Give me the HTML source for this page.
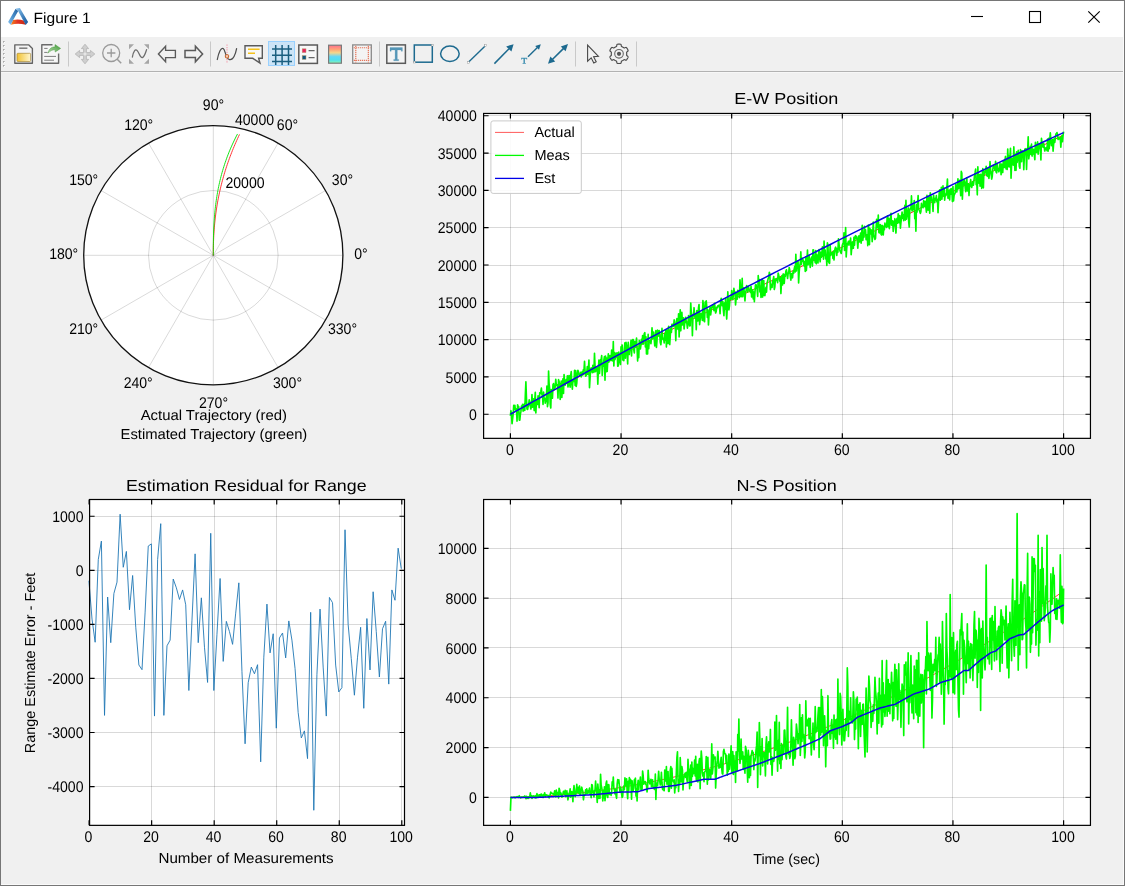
<!DOCTYPE html>
<html><head><meta charset="utf-8"><title>Figure 1</title>
<style>html,body{margin:0;padding:0;background:#f0f0f0;overflow:hidden}body{width:1125px;height:886px;position:relative;font-family:"Liberation Sans", sans-serif}svg{position:absolute;left:0;top:0;will-change:transform;font-family:"Liberation Sans", sans-serif}text{white-space:pre;text-rendering:geometricPrecision}</style></head><body>
<svg width="1125" height="886" viewBox="0 0 1125 886">
<rect x="0" y="0" width="1125" height="886" fill="#f0f0f0"/>
<rect x="0" y="0" width="1125" height="37" fill="#fff"/>
<rect x="0" y="71" width="1125" height="1" fill="#b2b2b2"/>
<rect x="0" y="72" width="1125" height="1" fill="#f7f7f7"/>
<defs><linearGradient id="lgL" x1="0" y1="1" x2="1" y2="0"><stop offset="0" stop-color="#82bfee"/><stop offset="0.5" stop-color="#4a8fcb"/><stop offset="1" stop-color="#2562a2"/></linearGradient><linearGradient id="lgR" x1="0" y1="0" x2="1" y2="1"><stop offset="0" stop-color="#93c8ef"/><stop offset="0.35" stop-color="#5d9bd0"/><stop offset="0.7" stop-color="#2f6fae"/><stop offset="1" stop-color="#17549a"/></linearGradient><linearGradient id="lgB" x1="0" y1="0" x2="1" y2="0"><stop offset="0" stop-color="#f58a1c"/><stop offset="0.45" stop-color="#e23424"/><stop offset="1" stop-color="#c42a14"/></linearGradient><linearGradient id="gSave" x1="0" y1="0" x2="1" y2="0"><stop offset="0" stop-color="#f2c230"/><stop offset="1" stop-color="#fff6cf"/></linearGradient><linearGradient id="gCb" x1="0" y1="0" x2="0" y2="1"><stop offset="0" stop-color="#ff6f8e"/><stop offset="0.25" stop-color="#ffa878"/><stop offset="0.42" stop-color="#f6d78c"/><stop offset="0.53" stop-color="#aed6c2"/><stop offset="0.64" stop-color="#62d8f8"/><stop offset="0.82" stop-color="#52e0ee"/><stop offset="1" stop-color="#8af8b0"/></linearGradient><linearGradient id="gArr" x1="0" y1="1" x2="1" y2="0"><stop offset="0" stop-color="#b9dcae"/><stop offset="1" stop-color="#3f9a35"/></linearGradient></defs>
<path d="M13 20.1Q18.1 18.9 23.6 20.5L25.8 24.8Q18.1 22.8 10.8 24.7Z" fill="url(#lgB)"/>
<path d="M15.6 8.8L18.2 10.9L12.9 20.4L10.7 24.7L8.1 21.9Z" fill="url(#lgL)"/>
<path d="M15.9 8.5L19.9 8L28.1 21.9L25.7 24.9L18.1 11.1Z" fill="url(#lgR)"/>
<text x="33.6" y="22.9" font-size="14.8" fill="#000" textLength="57" lengthAdjust="spacingAndGlyphs">Figure 1</text>
<path d="M971 16.5H983" stroke="#000" stroke-width="1.1"/>
<rect x="1029.5" y="11.5" width="11" height="11" fill="none" stroke="#000" stroke-width="1.1"/>
<path d="M1088.3 11.3L1099.7 22.7M1099.7 11.3L1088.3 22.7" stroke="#000" stroke-width="1.15"/>
<rect x="3" y="41" width="1.6" height="1.6" fill="#a8a8a8"/><rect x="4" y="42" width="1" height="1" fill="#fff"/><rect x="3" y="45" width="1.6" height="1.6" fill="#a8a8a8"/><rect x="4" y="46" width="1" height="1" fill="#fff"/><rect x="3" y="49" width="1.6" height="1.6" fill="#a8a8a8"/><rect x="4" y="50" width="1" height="1" fill="#fff"/><rect x="3" y="53" width="1.6" height="1.6" fill="#a8a8a8"/><rect x="4" y="54" width="1" height="1" fill="#fff"/><rect x="3" y="57" width="1.6" height="1.6" fill="#a8a8a8"/><rect x="4" y="58" width="1" height="1" fill="#fff"/><rect x="3" y="61" width="1.6" height="1.6" fill="#a8a8a8"/><rect x="4" y="62" width="1" height="1" fill="#fff"/><rect x="3" y="65" width="1.6" height="1.6" fill="#a8a8a8"/><rect x="4" y="66" width="1" height="1" fill="#fff"/>
<path d="M68.5 41.5V66.5" stroke="#c9c9c9" stroke-width="1"/>
<path d="M210.5 41.5V66.5" stroke="#c9c9c9" stroke-width="1"/>
<path d="M379.5 41.5V66.5" stroke="#c9c9c9" stroke-width="1"/>
<path d="M575.5 41.5V66.5" stroke="#c9c9c9" stroke-width="1"/>
<path d="M636.5 41.5V66.5" stroke="#c9c9c9" stroke-width="1"/>
<circle cx="213.3" cy="255.3" r="129.6" fill="#fff"/>
<path d="M213.3 255.3L342.9 255.3M213.3 255.3L325.54 190.5M213.3 255.3L278.1 143.06M213.3 255.3L213.3 125.7M213.3 255.3L148.5 143.06M213.3 255.3L101.06 190.5M213.3 255.3L83.7 255.3M213.3 255.3L101.06 320.1M213.3 255.3L148.5 367.54M213.3 255.3L213.3 384.9M213.3 255.3L278.1 367.54M213.3 255.3L325.54 320.1" stroke="#000" stroke-opacity="0.15" stroke-width="1" fill="none"/>
<circle cx="213.3" cy="255.3" r="64.8" fill="none" stroke="#000" stroke-opacity="0.15" stroke-width="1"/>
<path d="M213.3 255.3L213.3 253.29L213.31 251.27L213.34 249.26L213.37 247.24L213.41 245.23L213.47 243.21L213.53 241.2L213.61 239.19L213.7 237.17L213.81 235.16L213.93 233.14L214.06 231.13L214.21 229.12L214.37 227.1L214.54 225.09L214.73 223.07L214.94 221.06L215.15 219.04L215.39 217.03L215.64 215.02L215.9 213L216.18 210.99L216.48 208.97L216.79 206.96L217.12 204.95L217.46 202.93L217.82 200.92L218.2 198.9L218.59 196.89L219 194.87L219.43 192.86L219.87 190.85L220.34 188.83L220.81 186.82L221.31 184.8L221.82 182.79L222.35 180.77L222.9 178.76L223.46 176.75L224.04 174.73L224.64 172.72L225.26 170.7L225.89 168.69L226.55 166.68L227.22 164.66L227.91 162.65L228.62 160.63L229.34 158.62L230.09 156.6L230.85 154.59L231.63 152.58L232.43 150.56L233.25 148.55L234.09 146.53L234.95 144.52L235.82 142.5L236.71 140.49L237.63 138.48L238.56 136.46L239.51 134.45" stroke="#ff2020" stroke-width="0.9" fill="none"/>
<path d="M213.3 255.3L213.3 253.28L213.3 251.26L213.31 249.23L213.32 247.21L213.33 245.19L213.35 243.17L213.38 241.14L213.42 239.12L213.46 237.1L213.51 235.08L213.57 233.05L213.64 231.03L213.72 229.01L213.81 226.99L213.91 224.97L214.03 222.94L214.16 220.92L214.3 218.9L214.45 216.88L214.62 214.85L214.8 212.83L215 210.81L215.21 208.79L215.43 206.76L215.68 204.74L215.94 202.72L216.22 200.7L216.51 198.68L216.82 196.65L217.16 194.63L217.51 192.61L217.88 190.59L218.26 188.56L218.67 186.54L219.1 184.52L219.55 182.5L220.02 180.47L220.51 178.45L221.03 176.43L221.56 174.41L222.12 172.39L222.71 170.36L223.31 168.34L223.94 166.32L224.59 164.3L225.27 162.27L225.97 160.25L226.7 158.23L227.45 156.21L228.23 154.19L229.03 152.16L229.86 150.14L230.72 148.12L231.61 146.1L232.52 144.07L233.46 142.05L234.43 140.03L235.42 138.01L236.45 135.98L237.5 133.96" stroke="#00e000" stroke-width="0.9" fill="none"/>
<circle cx="213.3" cy="255.3" r="129.6" fill="none" stroke="#111" stroke-width="1.3"/>
<text x="361" y="258.8" font-size="15.4" text-anchor="middle" fill="#000" textLength="13.47" lengthAdjust="spacingAndGlyphs">0°</text>
<text x="342.5" y="184.8" font-size="15.4" text-anchor="middle" fill="#000" textLength="21.31" lengthAdjust="spacingAndGlyphs">30°</text>
<text x="287.5" y="129.8" font-size="15.4" text-anchor="middle" fill="#000" textLength="21.31" lengthAdjust="spacingAndGlyphs">60°</text>
<text x="213.5" y="109.8" font-size="15.4" text-anchor="middle" fill="#000" textLength="21.31" lengthAdjust="spacingAndGlyphs">90°</text>
<text x="138.7" y="129.8" font-size="15.4" text-anchor="middle" fill="#000" textLength="29.14" lengthAdjust="spacingAndGlyphs">120°</text>
<text x="83.7" y="184.8" font-size="15.4" text-anchor="middle" fill="#000" textLength="29.14" lengthAdjust="spacingAndGlyphs">150°</text>
<text x="63.7" y="258.8" font-size="15.4" text-anchor="middle" fill="#000" textLength="29.14" lengthAdjust="spacingAndGlyphs">180°</text>
<text x="83.7" y="333.8" font-size="15.4" text-anchor="middle" fill="#000" textLength="29.14" lengthAdjust="spacingAndGlyphs">210°</text>
<text x="138.2" y="387.8" font-size="15.4" text-anchor="middle" fill="#000" textLength="29.14" lengthAdjust="spacingAndGlyphs">240°</text>
<text x="213.5" y="407.8" font-size="15.4" text-anchor="middle" fill="#000" textLength="29.14" lengthAdjust="spacingAndGlyphs">270°</text>
<text x="287.5" y="387.8" font-size="15.4" text-anchor="middle" fill="#000" textLength="29.14" lengthAdjust="spacingAndGlyphs">300°</text>
<text x="342.5" y="333.8" font-size="15.4" text-anchor="middle" fill="#000" textLength="29.14" lengthAdjust="spacingAndGlyphs">330°</text>
<text x="245" y="187.8" font-size="15.4" text-anchor="middle" fill="#000" textLength="39.17" lengthAdjust="spacingAndGlyphs">20000</text>
<text x="254.5" y="124.8" font-size="15.4" text-anchor="middle" fill="#000" textLength="39.17" lengthAdjust="spacingAndGlyphs">40000</text>
<text x="213.85" y="419.6" font-size="14.5" text-anchor="middle" fill="#000" textLength="146.4" lengthAdjust="spacingAndGlyphs">Actual Trajectory (red)</text>
<text x="213.9" y="438.7" font-size="14.5" text-anchor="middle" fill="#000" textLength="186.8" lengthAdjust="spacingAndGlyphs">Estimated Trajectory (green)</text>
<rect x="483.6" y="113.45" width="606.85" height="324.9" fill="#fff"/>
<path d="M510.5 113.45V438.35M621.5 113.45V438.35M731.5 113.45V438.35M842.5 113.45V438.35M952.5 113.45V438.35M1063.5 113.45V438.35" stroke="#000" stroke-opacity="0.15" stroke-width="1" fill="none"/>
<path d="M483.6 414.5H1090.45M483.6 376.5H1090.45M483.6 339.5H1090.45M483.6 302.5H1090.45M483.6 265.5H1090.45M483.6 227.5H1090.45M483.6 190.5H1090.45M483.6 153.5H1090.45M483.6 115.5H1090.45" stroke="#000" stroke-opacity="0.15" stroke-width="1" fill="none"/>
<path d="M510.4 414.25L515.93 411.19L521.46 408.13L527 405.08L532.53 402.04L538.06 399L543.59 395.97L549.12 392.94L554.66 389.92L560.19 386.91L565.72 383.9L571.25 380.97L576.78 378.04L582.32 375.12L587.85 372.21L593.38 369.31L598.91 366.4L604.44 363.51L609.98 360.62L615.51 357.74L621.04 354.86L626.57 352.06L632.1 349.27L637.64 346.48L643.17 343.7L648.7 340.93L654.23 338.16L659.76 335.39L665.3 332.63L670.83 329.88L676.36 327.14L681.89 324.39L687.42 321.66L692.96 318.93L698.49 316.21L704.02 313.49L709.55 310.78L715.08 308.07L720.62 305.37L726.15 302.67L731.68 299.98L737.21 297.3L742.74 294.62L748.28 291.95L753.81 289.28L759.34 286.62L764.87 283.96L770.4 281.31L775.94 278.67L781.47 276.03L787 273.4L792.53 270.73L798.06 268.08L803.6 265.42L809.13 262.78L814.66 260.13L820.19 257.5L825.72 254.87L831.26 252.24L836.79 249.63L842.32 247.01L847.85 244.26L853.38 241.51L858.92 238.76L864.45 236.02L869.98 233.29L875.51 230.56L881.04 227.84L886.58 225.12L892.11 222.41L897.64 219.7L903.17 216.85L908.7 214.01L914.24 211.17L919.77 208.34L925.3 205.52L930.83 202.7L936.36 199.88L941.9 197.07L947.43 194.27L952.96 191.47L958.49 188.64L964.02 185.82L969.56 183L975.09 180.19L980.62 177.38L986.15 174.58L991.68 171.79L997.22 169L1002.75 166.21L1008.28 163.44L1013.81 160.55L1019.34 157.67L1024.88 154.8L1030.41 151.93L1035.94 149.07L1041.47 146.22L1047 143.37L1052.54 140.52L1058.07 137.68L1063.6 134.85" stroke="#ff2020" stroke-width="1" fill="none"/>
<path d="M510.4 415.87L510.95 410.7L511.51 415.07L512.06 423.7L512.61 418.92L513.17 414.07L513.72 405.36L514.27 409.42L514.83 405.22L515.38 409.92L515.93 408.69L516.49 409.71L517.04 421.14L517.59 404.85L518.14 406.75L518.7 406.5L519.25 420.08L519.8 420.11L520.36 414.39L520.91 411.41L521.46 406.2L522.02 408.12L522.57 404.22L523.12 411.29L523.68 404.96L524.23 404.11L524.78 410.5L525.34 395.1L525.89 381.72L526.44 397.8L527 409.02L527.55 409.47L528.1 406.66L528.66 404.85L529.21 399.86L529.76 401.99L530.32 406.09L530.87 409.02L531.42 405.95L531.97 394.6L532.53 407.16L533.08 400.18L533.63 398.73L534.19 410.58L534.74 400.52L535.29 392.24L535.85 412.99L536.4 401.95L536.95 400.28L537.51 404.49L538.06 395.85L538.61 399.09L539.17 407.68L539.72 392.84L540.27 393.54L540.83 391.49L541.38 388.04L541.93 394.58L542.49 395.82L543.04 404.51L543.59 392.07L544.15 399.55L544.7 398.23L545.25 403.08L545.8 400.9L546.36 397.82L546.91 385.98L547.46 406.74L548.02 402.79L548.57 371.05L549.12 383.79L549.68 388.97L550.23 404.39L550.78 408.01L551.34 389.47L551.89 396.1L552.44 398.23L553 384.63L553.55 383.54L554.1 389.23L554.66 388.36L555.21 386.86L555.76 379.21L556.32 385.09L556.87 385.42L557.42 384.94L557.98 398.06L558.53 379.68L559.08 381.45L559.63 383.85L560.19 399.43L560.74 390.62L561.29 380.96L561.85 397.49L562.4 386.87L562.95 378.93L563.51 393.42L564.06 374.59L564.61 381L565.17 385.15L565.72 381.84L566.27 379.48L566.83 382.55L567.38 375.75L567.93 386.92L568.49 385.06L569.04 375.53L569.59 381.67L570.15 387.14L570.7 375.26L571.25 371.67L571.81 383.5L572.36 389.13L572.91 380.94L573.46 380.74L574.02 381.39L574.57 370.3L575.12 385.43L575.68 370.63L576.23 386.38L576.78 383.03L577.34 373.75L577.89 370.3L578.44 371.72L579 374.69L579.55 375.68L580.1 375.32L580.66 372.35L581.21 376.83L581.76 373.66L582.32 371.49L582.87 374.83L583.42 369.7L583.98 370.66L584.53 361.21L585.08 371.61L585.64 376.09L586.19 375.45L586.74 372.88L587.29 366.64L587.85 374.35L588.4 369.47L588.95 359.98L589.51 387.61L590.06 378.18L590.61 369.21L591.17 367.94L591.72 368.66L592.27 372.62L592.83 365.44L593.38 367.52L593.93 372.33L594.49 353.31L595.04 366.18L595.59 371.66L596.15 368.49L596.7 369L597.25 367.67L597.81 384.29L598.36 369.78L598.91 360.01L599.47 373.53L600.02 366.25L600.57 359.49L601.12 359.82L601.68 355.5L602.23 375.46L602.78 366.62L603.34 366.25L603.89 359.85L604.44 356.58L605 380.24L605.55 356.03L606.1 371.82L606.66 358.02L607.21 371.53L607.76 360.66L608.32 353.91L608.87 362.14L609.42 359.7L609.98 355.56L610.53 359.43L611.08 360.6L611.64 350.03L612.19 352.82L612.74 361.04L613.3 341.48L613.85 365.87L614.4 352.51L614.95 359.71L615.51 356.9L616.06 352.98L616.61 355.75L617.17 352.82L617.72 366.27L618.27 365.87L618.83 352.11L619.38 361.83L619.93 361.94L620.49 364.47L621.04 346.83L621.59 349.84L622.15 344.95L622.7 359.97L623.25 353.73L623.81 360.69L624.36 348.32L624.91 342.82L625.47 358.27L626.02 342.44L626.57 345.79L627.13 352.91L627.68 364.01L628.23 342.3L628.78 351.55L629.34 354.49L629.89 347.85L630.44 347.5L631 340.32L631.55 356.02L632.1 342.06L632.66 339.55L633.21 339.5L633.76 349.58L634.32 352.87L634.87 341.41L635.42 346.86L635.98 346.53L636.53 338L637.08 348.43L637.64 361.05L638.19 348.66L638.74 357.68L639.3 340.45L639.85 343.36L640.4 348.97L640.96 344.87L641.51 339.25L642.06 343.76L642.61 335.56L643.17 344.09L643.72 336.82L644.27 333.68L644.83 332.66L645.38 346.85L645.93 336.73L646.49 353.93L647.04 348.63L647.59 353.93L648.15 334.42L648.7 348.74L649.25 340.73L649.81 341.59L650.36 340.28L650.91 343.57L651.47 338.06L652.02 327.9L652.57 338.71L653.13 335.34L653.68 332.09L654.23 339.41L654.79 345.87L655.34 341.13L655.89 330.52L656.44 347.49L657 340.57L657.55 330.11L658.1 331.19L658.66 335.9L659.21 330.56L659.76 334.34L660.32 342.59L660.87 344.76L661.42 338.62L661.98 328.44L662.53 337.6L663.08 339.46L663.64 338.35L664.19 342.9L664.74 333.65L665.3 340.12L665.85 330.05L666.4 347.05L666.96 329.73L667.51 335.6L668.06 343.58L668.62 326.39L669.17 332.45L669.72 344.58L670.27 335.71L670.83 328.04L671.38 332.52L671.93 324.38L672.49 324.32L673.04 324.56L673.59 326.44L674.15 319.77L674.7 323.77L675.25 324.82L675.81 340.63L676.36 321.45L676.91 318.56L677.47 328.47L678.02 329.29L678.57 313.73L679.13 336.92L679.68 322.52L680.23 309.84L680.79 330.83L681.34 320.29L681.89 312.43L682.45 324.88L683 320.29L683.55 317.85L684.1 329.04L684.66 323.59L685.21 320.9L685.76 317.24L686.32 322.42L686.87 323.17L687.42 328.1L687.98 323.66L688.53 315.46L689.08 320.19L689.64 325.98L690.19 325.63L690.74 303.11L691.3 312.52L691.85 315.43L692.4 335.65L692.96 314.99L693.51 315.61L694.06 307.7L694.62 315.4L695.17 318.27L695.72 314.25L696.28 329.63L696.83 310.47L697.38 314.69L697.93 320.93L698.49 307.8L699.04 304.46L699.59 324.56L700.15 319.62L700.7 313.27L701.25 313.68L701.81 317.1L702.36 320.48L702.91 300.58L703.47 307.18L704.02 321.06L704.57 321.75L705.13 302.14L705.68 306.4L706.23 300.85L706.79 306.99L707.34 317.39L707.89 309.93L708.45 325.02L709 315.79L709.55 311.15L710.11 307.19L710.66 314.85L711.21 310.75L711.76 306.78L712.32 307.03L712.87 305.1L713.42 307.55L713.98 310.66L714.53 303.33L715.08 307.76L715.64 313.04L716.19 311.5L716.74 307.26L717.3 307.68L717.85 305.72L718.4 306.45L718.96 305.06L719.51 306.76L720.06 313.62L720.62 302.69L721.17 298.41L721.72 302.07L722.28 305.76L722.83 301.46L723.38 310.14L723.94 315.78L724.49 303.1L725.04 309.11L725.59 298.25L726.15 309.55L726.7 319.07L727.25 308.73L727.81 291.86L728.36 304.02L728.91 310.01L729.47 305.9L730.02 297.48L730.57 297.37L731.13 299.13L731.68 290.57L732.23 295.23L732.79 299.58L733.34 295.39L733.89 288.41L734.45 292.48L735 291.88L735.55 304.97L736.11 298.78L736.66 292.94L737.21 299.18L737.77 290.25L738.32 292.98L738.87 290.73L739.42 297.57L739.98 279.81L740.53 287.83L741.08 296.79L741.64 294.58L742.19 278.43L742.74 296.8L743.3 288.81L743.85 287.87L744.4 293.78L744.96 300.95L745.51 292.09L746.06 290.74L746.62 285.58L747.17 287.52L747.72 292.06L748.28 286.53L748.83 288.26L749.38 290.11L749.94 290.8L750.49 292.42L751.04 286.26L751.6 297.03L752.15 294.07L752.7 289.78L753.25 298.83L753.81 292.05L754.36 301.76L754.91 293.08L755.47 284.88L756.02 284.62L756.57 288.3L757.13 289.16L757.68 296.4L758.23 275.56L758.79 283.61L759.34 279.68L759.89 291.95L760.45 287.26L761 297.36L761.55 280.61L762.11 279.36L762.66 297.06L763.21 285.09L763.77 280.5L764.32 295.41L764.87 295.54L765.43 290.45L765.98 287.42L766.53 292.07L767.08 282.7L767.64 281.06L768.19 278.35L768.74 277.66L769.3 272.31L769.85 274.19L770.4 289.64L770.96 284.26L771.51 287.51L772.06 287.35L772.62 280.77L773.17 279.96L773.72 276.62L774.28 289.53L774.83 287.05L775.38 279.08L775.94 279.94L776.49 280.38L777.04 278.54L777.6 282.7L778.15 273.17L778.7 275.1L779.26 277.64L779.81 281.09L780.36 277.66L780.91 293.56L781.47 282.26L782.02 275.53L782.57 285.04L783.13 273.98L783.68 274.04L784.23 283.45L784.79 276.04L785.34 276.18L785.89 271.01L786.45 269.78L787 273.63L787.55 278.53L788.11 273.78L788.66 273.01L789.21 267.67L789.77 270.2L790.32 276.38L790.87 280.12L791.43 273.63L791.98 275.7L792.53 277.79L793.09 271.2L793.64 273.32L794.19 269.27L794.74 266.35L795.3 272.02L795.85 254.4L796.4 270.91L796.96 261.62L797.51 267.57L798.06 261L798.62 282.88L799.17 272.31L799.72 265.71L800.28 263.19L800.83 251.93L801.38 264.44L801.94 258.1L802.49 261.09L803.04 259.68L803.6 262.19L804.15 266.15L804.7 261.66L805.26 271.47L805.81 256.87L806.36 270.55L806.92 262.25L807.47 250.12L808.02 264.72L808.57 262.92L809.13 255.4L809.68 262.35L810.23 267.37L810.79 260.35L811.34 258.03L811.89 256.95L812.45 266.09L813 249.81L813.55 250.09L814.11 260.28L814.66 258.43L815.21 262.59L815.77 250.64L816.32 263.81L816.87 254.8L817.43 261.86L817.98 262.95L818.53 253.73L819.09 249.57L819.64 257.83L820.19 261.8L820.75 252.09L821.3 257.29L821.85 254.74L822.4 246.79L822.96 249.01L823.51 259.22L824.06 241.17L824.62 255.37L825.17 250.15L825.72 258.97L826.28 254.89L826.83 265.44L827.38 242.75L827.94 245.16L828.49 261.26L829.04 262.84L829.6 263.31L830.15 245.31L830.7 255.42L831.26 252.63L831.81 253.97L832.36 252.49L832.92 258.36L833.47 251.04L834.02 260.05L834.58 251.13L835.13 248.45L835.68 247.18L836.23 251.36L836.79 255.36L837.34 248.35L837.89 252.18L838.45 238.91L839 243.71L839.55 249.05L840.11 251.05L840.66 252.25L841.21 253.48L841.77 249.51L842.32 245.14L842.87 243.47L843.43 242.85L843.98 232.87L844.53 250.38L845.09 245.55L845.64 227.63L846.19 256.92L846.75 248.11L847.3 243.46L847.85 243.28L848.41 241.39L848.96 245.22L849.51 241.11L850.06 242.82L850.62 237.99L851.17 254.61L851.72 247.94L852.28 242.07L852.83 248.32L853.38 248.13L853.94 237.25L854.49 245.08L855.04 236.65L855.6 235.68L856.15 238.19L856.7 236.63L857.26 240.25L857.81 248.25L858.36 239.22L858.92 235.88L859.47 241.84L860.02 238.84L860.58 233.19L861.13 243.23L861.68 233.33L862.24 225.3L862.79 240.36L863.34 235.64L863.89 237.25L864.45 226.25L865 233.74L865.55 229.78L866.11 239.58L866.66 235.03L867.21 234.72L867.77 245.64L868.32 224.97L868.87 228.13L869.43 244.65L869.98 228.57L870.53 233.85L871.09 229.9L871.64 230.14L872.19 241.7L872.75 233.27L873.3 222.18L873.85 235.02L874.41 237.59L874.96 239.45L875.51 238.3L876.07 228.16L876.62 219.28L877.17 227.02L877.72 227.91L878.28 215.03L878.83 232.22L879.38 232.93L879.94 225.03L880.49 224.63L881.04 234.27L881.6 234.99L882.15 225.45L882.7 225.45L883.26 235.04L883.81 227.76L884.36 229.65L884.92 223.02L885.47 226.4L886.02 225.94L886.58 227.36L887.13 218.17L887.68 215.76L888.24 226.63L888.79 218.67L889.34 228.57L889.9 223.04L890.45 218.46L891 213.35L891.55 225.11L892.11 222.88L892.66 220.89L893.21 231.37L893.77 221.5L894.32 225.61L894.87 218.7L895.43 227.95L895.98 233.05L896.53 220L897.09 218.32L897.64 223.18L898.19 213.78L898.75 220.87L899.3 222.69L899.85 215.53L900.41 228.22L900.96 222.29L901.51 217.84L902.07 212.04L902.62 218.17L903.17 214.9L903.73 220.73L904.28 214.37L904.83 205.45L905.38 220.07L905.94 200.42L906.49 219.23L907.04 214.75L907.6 213.48L908.15 207.8L908.7 221.86L909.26 227.05L909.81 209.6L910.36 208.11L910.92 208.92L911.47 195.91L912.02 211.01L912.58 210.41L913.13 205.85L913.68 209.12L914.24 200.62L914.79 218.74L915.34 212.99L915.9 231.25L916.45 204.89L917 212.12L917.56 203.61L918.11 195.53L918.66 208.95L919.21 210.24L919.77 211.51L920.32 213.37L920.87 211.77L921.43 203.44L921.98 206.98L922.53 206.51L923.09 207.74L923.64 200.56L924.19 202.95L924.75 206.7L925.3 201.3L925.85 206.2L926.41 212.26L926.96 195.44L927.51 201.44L928.07 210.18L928.62 196.98L929.17 201.35L929.73 213.18L930.28 192.77L930.83 200.58L931.39 196.76L931.94 200.88L932.49 202.8L933.04 211.39L933.6 195.13L934.15 200.82L934.7 202.54L935.26 198.22L935.81 199.67L936.36 195.6L936.92 201.95L937.47 199.55L938.02 212.6L938.58 201.44L939.13 194.19L939.68 189.72L940.24 200.22L940.79 198.4L941.34 187.31L941.9 199.14L942.45 192.14L943 185.87L943.56 195.98L944.11 188.17L944.66 200.18L945.22 194.07L945.77 195.6L946.32 194.1L946.87 187.38L947.43 179.11L947.98 198.21L948.53 197.36L949.09 190.27L949.64 199.84L950.19 189.72L950.75 188.96L951.3 194.07L951.85 188.66L952.41 201.58L952.96 186.65L953.51 200.99L954.07 195.32L954.62 194.15L955.17 192.88L955.73 184.61L956.28 189.26L956.83 192.01L957.39 185.76L957.94 178.9L958.49 188.6L959.05 186.04L959.6 180.21L960.15 186.1L960.7 195.65L961.26 171.43L961.81 172.94L962.36 199.25L962.92 186.63L963.47 183.45L964.02 179.69L964.58 181.29L965.13 186.98L965.68 191.66L966.24 184.04L966.79 177.85L967.34 191.04L967.9 190.36L968.45 183.72L969 195.57L969.56 184.65L970.11 185.49L970.66 179.58L971.22 186.61L971.77 187.47L972.32 184.09L972.88 181.63L973.43 185.25L973.98 180.67L974.53 175.71L975.09 172.67L975.64 169.09L976.19 184.6L976.75 182.01L977.3 194.81L977.85 166.74L978.41 183.1L978.96 178.44L979.51 174.63L980.07 186.28L980.62 174.44L981.17 177.27L981.73 188.4L982.28 174.69L982.83 168.68L983.39 187.83L983.94 170.58L984.49 174.09L985.05 172.13L985.6 172.06L986.15 166.31L986.71 175.72L987.26 168.48L987.81 176.34L988.36 168.85L988.92 178.35L989.47 173.59L990.02 161.65L990.58 169.52L991.13 173.07L991.68 179.05L992.24 176.52L992.79 170L993.34 164.99L993.9 167.97L994.45 167.07L995 170.38L995.56 161.26L996.11 172.03L996.66 172.76L997.22 163.36L997.77 168.32L998.32 170.21L998.88 171.82L999.43 169.51L999.98 163.65L1000.54 165.08L1001.09 174.72L1001.64 164.07L1002.19 165.36L1002.75 172.56L1003.3 161.03L1003.85 167.44L1004.41 167.51L1004.96 160.05L1005.51 156.45L1006.07 168.91L1006.62 161.49L1007.17 169.55L1007.73 149.03L1008.28 166.57L1008.83 155.57L1009.39 166.96L1009.94 157.42L1010.49 148.21L1011.05 178.11L1011.6 164.46L1012.15 158.24L1012.71 161.72L1013.26 165.08L1013.81 146.9L1014.37 159.76L1014.92 170.41L1015.47 154.27L1016.02 170.32L1016.58 151.81L1017.13 162.49L1017.68 157.62L1018.24 150.25L1018.79 157.21L1019.34 166.5L1019.9 168.14L1020.45 149.6L1021 152.11L1021.56 161.7L1022.11 150.78L1022.66 152.8L1023.22 151.55L1023.77 169.7L1024.32 157L1024.88 149.09L1025.43 149.86L1025.98 148.64L1026.54 169.53L1027.09 152.58L1027.64 150.24L1028.2 136.89L1028.75 158.84L1029.3 154.59L1029.85 151.99L1030.41 146.31L1030.96 154.46L1031.51 144.08L1032.07 156.07L1032.62 149.1L1033.17 153.85L1033.73 149.21L1034.28 154.31L1034.83 159.77L1035.39 142.42L1035.94 147.15L1036.49 152.33L1037.05 147.23L1037.6 141.93L1038.15 154.13L1038.71 148.34L1039.26 143.94L1039.81 143.73L1040.37 148.91L1040.92 159.87L1041.47 138.33L1042.03 143.85L1042.58 145.56L1043.13 147.13L1043.68 143.4L1044.24 147.49L1044.79 151L1045.34 148.91L1045.9 147.72L1046.45 147.53L1047 150.72L1047.56 139.05L1048.11 151.1L1048.66 138.33L1049.22 148.66L1049.77 139.71L1050.32 132.94L1050.88 140.09L1051.43 145.73L1051.98 140.5L1052.54 139.58L1053.09 151.23L1053.64 143.81L1054.2 138.64L1054.75 142.36L1055.3 138.6L1055.86 134.16L1056.41 133.67L1056.96 132.51L1057.51 134.23L1058.07 139.51L1058.62 137.52L1059.17 138.84L1059.73 138.82L1060.28 137.69L1060.83 147.21L1061.39 138.1L1061.94 135.85L1062.49 141.59L1063.05 135.29L1063.6 131.58" stroke="#00fa00" stroke-width="1.65" fill="none" stroke-linejoin="round"/>
<path d="M510.4 414.25L515.93 411.15L521.46 408.06L527 404.97L532.53 401.89L538.06 398.82L543.59 395.75L549.12 392.68L554.66 389.62L560.19 386.57L565.72 383.52L571.25 380.48L576.78 377.45L582.32 374.42L587.85 371.39L593.38 368.37L598.91 365.36L604.44 362.35L609.98 359.35L615.51 356.36L621.04 353.37L626.57 350.38L632.1 347.4L637.64 344.43L643.17 341.46L648.7 338.5L654.23 335.54L659.76 332.59L665.3 329.65L670.83 326.71L676.36 323.78L681.89 320.85L687.42 317.93L692.96 315.01L698.49 312.1L704.02 309.2L709.55 306.3L715.08 303.4L720.62 300.52L726.15 297.64L731.68 294.76L737.21 291.89L742.74 289.02L748.28 286.16L753.81 283.31L759.34 280.46L764.87 277.62L770.4 274.79L775.94 271.95L781.47 269.13L787 266.31L792.53 263.5L798.06 260.69L803.6 257.89L809.13 255.09L814.66 252.3L820.19 249.51L825.72 246.74L831.26 243.96L836.79 241.19L842.32 238.43L847.85 235.67L853.38 232.92L858.92 230.18L864.45 227.44L869.98 224.71L875.51 221.98L881.04 219.25L886.58 216.54L892.11 213.83L897.64 211.12L903.17 208.42L908.7 205.73L914.24 203.04L919.77 200.36L925.3 197.68L930.83 195.01L936.36 192.34L941.9 189.68L947.43 187.03L952.96 184.38L958.49 181.74L964.02 179.1L969.56 176.47L975.09 173.85L980.62 171.23L986.15 168.61L991.68 166L997.22 163.4L1002.75 160.8L1008.28 158.21L1013.81 155.63L1019.34 153.05L1024.88 150.47L1030.41 147.9L1035.94 145.34L1041.47 142.78L1047 140.23L1052.54 137.69L1058.07 135.15L1063.6 132.61" stroke="#0a0ae0" stroke-width="1.5" fill="none"/>
<path d="M510.4 438.35v-5M510.4 113.45v5M621.04 438.35v-5M621.04 113.45v5M731.68 438.35v-5M731.68 113.45v5M842.32 438.35v-5M842.32 113.45v5M952.96 438.35v-5M952.96 113.45v5M1063.6 438.35v-5M1063.6 113.45v5M483.6 414.25h5M1090.45 414.25h-5M483.6 376.94h5M1090.45 376.94h-5M483.6 339.63h5M1090.45 339.63h-5M483.6 302.32h5M1090.45 302.32h-5M483.6 265.01h5M1090.45 265.01h-5M483.6 227.7h5M1090.45 227.7h-5M483.6 190.39h5M1090.45 190.39h-5M483.6 153.08h5M1090.45 153.08h-5M483.6 115.77h5M1090.45 115.77h-5" stroke="#000" stroke-width="1.2" fill="none"/>
<rect x="483.6" y="113.45" width="606.85" height="324.9" fill="none" stroke="#000" stroke-width="1.2"/>
<text x="509.8" y="455.15" font-size="15.4" text-anchor="middle" fill="#000" textLength="7.83" lengthAdjust="spacingAndGlyphs">0</text>
<text x="620.44" y="455.15" font-size="15.4" text-anchor="middle" fill="#000" textLength="15.67" lengthAdjust="spacingAndGlyphs">20</text>
<text x="731.08" y="455.15" font-size="15.4" text-anchor="middle" fill="#000" textLength="15.67" lengthAdjust="spacingAndGlyphs">40</text>
<text x="841.72" y="455.15" font-size="15.4" text-anchor="middle" fill="#000" textLength="15.67" lengthAdjust="spacingAndGlyphs">60</text>
<text x="952.36" y="455.15" font-size="15.4" text-anchor="middle" fill="#000" textLength="15.67" lengthAdjust="spacingAndGlyphs">80</text>
<text x="1063" y="455.15" font-size="15.4" text-anchor="middle" fill="#000" textLength="23.5" lengthAdjust="spacingAndGlyphs">100</text>
<text x="476.9" y="419.85" font-size="15.4" text-anchor="end" fill="#000" textLength="7.83" lengthAdjust="spacingAndGlyphs">0</text>
<text x="476.9" y="382.54" font-size="15.4" text-anchor="end" fill="#000" textLength="31.34" lengthAdjust="spacingAndGlyphs">5000</text>
<text x="476.9" y="345.23" font-size="15.4" text-anchor="end" fill="#000" textLength="39.17" lengthAdjust="spacingAndGlyphs">10000</text>
<text x="476.9" y="307.92" font-size="15.4" text-anchor="end" fill="#000" textLength="39.17" lengthAdjust="spacingAndGlyphs">15000</text>
<text x="476.9" y="270.61" font-size="15.4" text-anchor="end" fill="#000" textLength="39.17" lengthAdjust="spacingAndGlyphs">20000</text>
<text x="476.9" y="233.3" font-size="15.4" text-anchor="end" fill="#000" textLength="39.17" lengthAdjust="spacingAndGlyphs">25000</text>
<text x="476.9" y="195.99" font-size="15.4" text-anchor="end" fill="#000" textLength="39.17" lengthAdjust="spacingAndGlyphs">30000</text>
<text x="476.9" y="158.68" font-size="15.4" text-anchor="end" fill="#000" textLength="39.17" lengthAdjust="spacingAndGlyphs">35000</text>
<text x="476.9" y="121.37" font-size="15.4" text-anchor="end" fill="#000" textLength="39.17" lengthAdjust="spacingAndGlyphs">40000</text>
<text x="786.2" y="104.45" font-size="16" text-anchor="middle" fill="#000" textLength="104" lengthAdjust="spacingAndGlyphs">E-W Position</text>
<rect x="490.9" y="120.9" width="90.4" height="72.5" rx="2.2" fill="#fff" fill-opacity="0.88" stroke="#cacaca" stroke-width="1"/>
<path d="M495 132.4H524" stroke="#ff3030" stroke-width="0.8"/>
<text x="534.4" y="136.8" font-size="14.5" text-anchor="start" fill="#000">Actual</text>
<path d="M495 155.4H524" stroke="#00fa00" stroke-width="1.3"/>
<text x="534.4" y="159.8" font-size="14.5" text-anchor="start" fill="#000">Meas</text>
<path d="M495 178.4H524" stroke="#0000e8" stroke-width="1.3"/>
<text x="534.4" y="182.8" font-size="14.5" text-anchor="start" fill="#000">Est</text>
<rect x="483.6" y="499.5" width="606.85" height="325.86" fill="#fff"/>
<path d="M510.5 499.5V825.36M621.5 499.5V825.36M731.5 499.5V825.36M842.5 499.5V825.36M952.5 499.5V825.36M1063.5 499.5V825.36" stroke="#000" stroke-opacity="0.15" stroke-width="1" fill="none"/>
<path d="M483.6 797.5H1090.45M483.6 747.5H1090.45M483.6 697.5H1090.45M483.6 647.5H1090.45M483.6 598.5H1090.45M483.6 548.5H1090.45" stroke="#000" stroke-opacity="0.15" stroke-width="1" fill="none"/>
<path d="M510.4 797.4L515.93 797.27L521.46 797.1L527 796.9L532.53 796.65L538.06 796.36L543.59 796.04L549.12 795.67L554.66 795.27L560.19 794.83L565.72 794.35L571.25 793.83L576.78 793.27L582.32 792.67L587.85 792.03L593.38 791.36L598.91 790.64L604.44 789.89L609.98 789.09L615.51 788.26L621.04 787.39L626.57 786.47L632.1 785.52L637.64 784.53L643.17 783.51L648.7 782.44L654.23 781.33L659.76 780.19L665.3 779L670.83 777.78L676.36 776.51L681.89 775.21L687.42 773.87L692.96 772.49L698.49 771.07L704.02 769.61L709.55 768.11L715.08 766.57L720.62 765L726.15 763.38L731.68 761.73L737.21 760.04L742.74 758.3L748.28 756.53L753.81 754.72L759.34 752.87L764.87 750.98L770.4 749.05L775.94 747.09L781.47 745.08L787 743.03L792.53 740.95L798.06 738.83L803.6 736.66L809.13 734.46L814.66 732.22L820.19 729.94L825.72 727.62L831.26 725.26L836.79 722.86L842.32 720.43L847.85 717.95L853.38 715.44L858.92 712.88L864.45 710.29L869.98 707.66L875.51 704.99L881.04 702.28L886.58 699.53L892.11 696.74L897.64 693.91L903.17 691.04L908.7 688.14L914.24 685.19L919.77 682.21L925.3 679.19L930.83 676.12L936.36 673.02L941.9 669.88L947.43 666.7L952.96 663.48L958.49 660.23L964.02 656.93L969.56 653.59L975.09 650.22L980.62 646.8L986.15 643.35L991.68 639.86L997.22 636.33L1002.75 632.76L1008.28 629.15L1013.81 625.5L1019.34 621.81L1024.88 618.08L1030.41 614.31L1035.94 610.51L1041.47 606.67L1047 602.78L1052.54 598.86L1058.07 594.9L1063.6 590.9" stroke="#ff2020" stroke-width="0.9" fill="none"/>
<path d="M510.4 810.85L510.95 797.34L511.51 797.22L512.06 797.46L512.61 797.64L513.17 797.36L513.72 797.2L514.27 796.98L514.83 797.71L515.38 797.76L515.93 796.99L516.49 797.06L517.04 796.55L517.59 796.75L518.14 797.26L518.7 797.34L519.25 795.71L519.8 797.33L520.36 797.63L520.91 797.87L521.46 797.04L522.02 796.98L522.57 797.32L523.12 797.09L523.68 796.8L524.23 796.43L524.78 796.04L525.34 796.77L525.89 798.59L526.44 796.25L527 798.29L527.55 797.05L528.1 798.38L528.66 796.82L529.21 797.66L529.76 796.54L530.32 792.93L530.87 796.78L531.42 795.68L531.97 798.32L532.53 797.02L533.08 795.76L533.63 796.72L534.19 796.06L534.74 796.4L535.29 797.94L535.85 795.66L536.4 797.66L536.95 793.6L537.51 797.17L538.06 795.29L538.61 796.33L539.17 794.75L539.72 797.27L540.27 794.55L540.83 796.42L541.38 793.97L541.93 795.03L542.49 795.85L543.04 797.5L543.59 794.61L544.15 795.12L544.7 792.81L545.25 796.67L545.8 794.8L546.36 794.84L546.91 795.25L547.46 795.36L548.02 795.37L548.57 796.99L549.12 797.86L549.68 796.5L550.23 794.29L550.78 792.16L551.34 793.3L551.89 793.05L552.44 793.62L553 793.75L553.55 794.92L554.1 793.45L554.66 790.92L555.21 796.04L555.76 796.93L556.32 790.17L556.87 794.47L557.42 792.53L557.98 792.72L558.53 797.98L559.08 788.38L559.63 790.05L560.19 794.34L560.74 792.7L561.29 794.38L561.85 797.19L562.4 794.96L562.95 793.51L563.51 791.29L564.06 792.4L564.61 794.27L565.17 790.32L565.72 796.66L566.27 791.87L566.83 790.8L567.38 795.11L567.93 799.8L568.49 796.98L569.04 793.28L569.59 792.28L570.15 788.87L570.7 797.2L571.25 793.82L571.81 791.59L572.36 794.25L572.91 801.77L573.46 790.83L574.02 785.51L574.57 789.97L575.12 796.69L575.68 794.86L576.23 792.53L576.78 784.24L577.34 790.95L577.89 792.73L578.44 787.31L579 793.34L579.55 785.95L580.1 795.52L580.66 794.67L581.21 790.01L581.76 787.19L582.32 790.11L582.87 791.42L583.42 799.8L583.98 795.34L584.53 794.89L585.08 794.53L585.64 789.89L586.19 793.61L586.74 788.89L587.29 791.75L587.85 793.44L588.4 791.47L588.95 790.07L589.51 788.14L590.06 793.84L590.61 792.71L591.17 797.62L591.72 784.47L592.27 785.03L592.83 792.23L593.38 793.51L593.93 796.89L594.49 790.44L595.04 790.2L595.59 780.98L596.15 789.86L596.7 794.58L597.25 802.38L597.81 784.1L598.36 789.81L598.91 798.37L599.47 789.7L600.02 798.31L600.57 774.28L601.12 784.84L601.68 787.43L602.23 791.06L602.78 800.83L603.34 790.68L603.89 797.84L604.44 786.85L605 800.77L605.55 794.41L606.1 783.33L606.66 781L607.21 795.69L607.76 797.5L608.32 784.67L608.87 784.71L609.42 794.46L609.98 792.83L610.53 792.77L611.08 795.41L611.64 792.57L612.19 781.87L612.74 784.86L613.3 777.15L613.85 789L614.4 789.19L614.95 793.9L615.51 788.96L616.06 795.68L616.61 798.3L617.17 783.98L617.72 779.56L618.27 782.95L618.83 779.93L619.38 786.17L619.93 791.82L620.49 786.96L621.04 789.62L621.59 793.97L622.15 797.42L622.7 796.11L623.25 787.06L623.81 786.01L624.36 789.77L624.91 777.92L625.47 785.55L626.02 782.93L626.57 778.83L627.13 791.55L627.68 798.76L628.23 781.41L628.78 790.5L629.34 777.59L629.89 783.73L630.44 779.29L631 780.75L631.55 799.22L632.1 780.8L632.66 789.87L633.21 790.34L633.76 788.13L634.32 780L634.87 779.1L635.42 778.12L635.98 796.08L636.53 788.75L637.08 800.86L637.64 785.23L638.19 780.3L638.74 789.62L639.3 782.53L639.85 782.51L640.4 776.96L640.96 789.7L641.51 789.68L642.06 789.13L642.61 771.12L643.17 775.7L643.72 784.29L644.27 781.67L644.83 782.36L645.38 781.61L645.93 784.5L646.49 785.32L647.04 792.01L647.59 787.4L648.15 770.3L648.7 778.44L649.25 781.85L649.81 783.83L650.36 781.64L650.91 779.33L651.47 786.8L652.02 780.28L652.57 779.83L653.13 787.31L653.68 787.53L654.23 789.07L654.79 789.48L655.34 774.16L655.89 799.47L656.44 782.97L657 785.58L657.55 785.56L658.1 779.76L658.66 771.42L659.21 779.69L659.76 781.31L660.32 785.01L660.87 781L661.42 772.42L661.98 782.93L662.53 788.98L663.08 789.86L663.64 788.48L664.19 790.74L664.74 770L665.3 776.04L665.85 780.86L666.4 766.52L666.96 784.18L667.51 772.15L668.06 771.6L668.62 791.42L669.17 791.44L669.72 785.97L670.27 770.11L670.83 766.6L671.38 788.27L671.93 768.42L672.49 780.74L673.04 780.72L673.59 781.98L674.15 779.87L674.7 792.95L675.25 785.64L675.81 787.62L676.36 772.14L676.91 757.69L677.47 751.73L678.02 779.16L678.57 791.55L679.13 779.56L679.68 784.28L680.23 757.51L680.79 770.25L681.34 782.03L681.89 766.59L682.45 770.13L683 790.01L683.55 779.76L684.1 776.91L684.66 774.37L685.21 773.17L685.76 777.47L686.32 772.35L686.87 779.56L687.42 782.39L687.98 759.28L688.53 770.15L689.08 769.25L689.64 788.67L690.19 774.79L690.74 765.11L691.3 785.45L691.85 762.07L692.4 776.43L692.96 768.54L693.51 773.66L694.06 770.05L694.62 760.17L695.17 775.93L695.72 756.22L696.28 779.44L696.83 780.82L697.38 764.22L697.93 781.94L698.49 774.81L699.04 761.74L699.59 758.49L700.15 788.71L700.7 765.32L701.25 751.05L701.81 757.93L702.36 772.52L702.91 776.11L703.47 772.83L704.02 781.58L704.57 772.22L705.13 771.27L705.68 770.69L706.23 756.59L706.79 771.29L707.34 784.12L707.89 757.43L708.45 779.81L709 773.03L709.55 769.54L710.11 771.65L710.66 778.58L711.21 770.34L711.76 743.92L712.32 773.92L712.87 768.67L713.42 754.8L713.98 758.76L714.53 758.38L715.08 757.11L715.64 788.08L716.19 775.8L716.74 764.69L717.3 760.42L717.85 751.4L718.4 760.4L718.96 768.14L719.51 764.88L720.06 767.53L720.62 762.21L721.17 757.22L721.72 768.53L722.28 773.76L722.83 774.09L723.38 751.67L723.94 749.37L724.49 752.49L725.04 753.85L725.59 753.94L726.15 763.41L726.7 755.52L727.25 775.28L727.81 765.26L728.36 771.3L728.91 754.05L729.47 769.2L730.02 763.5L730.57 757.34L731.13 745.87L731.68 771.12L732.23 772.72L732.79 751.65L733.34 774.44L733.89 755.64L734.45 767.73L735 761.99L735.55 782.51L736.11 751.75L736.66 766.27L737.21 770.96L737.77 734.56L738.32 751L738.87 719.13L739.42 754.34L739.98 763.46L740.53 757.67L741.08 738.97L741.64 758.99L742.19 752.88L742.74 751.87L743.3 769.48L743.85 756.34L744.4 764.08L744.96 773.25L745.51 746.44L746.06 748.84L746.62 756.12L747.17 768.39L747.72 782.2L748.28 750.35L748.83 757.6L749.38 777.72L749.94 756.76L750.49 775.37L751.04 755.97L751.6 753.6L752.15 750.68L752.7 752.27L753.25 752.68L753.81 769.58L754.36 759.55L754.91 761.05L755.47 757.26L756.02 750.43L756.57 745.64L757.13 732.02L757.68 787.44L758.23 747.92L758.79 755.69L759.34 722.54L759.89 740.21L760.45 774.62L761 746.92L761.55 759.12L762.11 738.54L762.66 765.99L763.21 752.93L763.77 753.15L764.32 752.49L764.87 758.94L765.43 775.88L765.98 744.3L766.53 736.71L767.08 751.15L767.64 764.03L768.19 747.03L768.74 741.82L769.3 751.88L769.85 749.44L770.4 729.45L770.96 764.46L771.51 756.46L772.06 775.15L772.62 758.09L773.17 758.47L773.72 761.41L774.28 757.48L774.83 722.06L775.38 750.07L775.94 748.71L776.49 715.59L777.04 747.55L777.6 771.28L778.15 740.51L778.7 759.54L779.26 722.31L779.81 763.64L780.36 753.87L780.91 768.52L781.47 743.67L782.02 759.63L782.57 745.63L783.13 749.97L783.68 753.23L784.23 730.24L784.79 730.13L785.34 742.73L785.89 756.71L786.45 759.05L787 739.04L787.55 707.38L788.11 749.41L788.66 754.09L789.21 752.61L789.77 758.36L790.32 756.34L790.87 744.65L791.43 719.82L791.98 741.17L792.53 748.66L793.09 765.16L793.64 737.3L794.19 740.72L794.74 758.76L795.3 756.45L795.85 740.32L796.4 723.98L796.96 729.65L797.51 735.88L798.06 743.8L798.62 733.67L799.17 738.58L799.72 704.56L800.28 755.52L800.83 743.47L801.38 717.8L801.94 741.46L802.49 714.84L803.04 737.57L803.6 734.38L804.15 742.27L804.7 757.95L805.26 751.31L805.81 700.8L806.36 725.36L806.92 725.74L807.47 719.98L808.02 725.85L808.57 718.39L809.13 738.71L809.68 737.81L810.23 718.25L810.79 739.45L811.34 754.98L811.89 736.99L812.45 741.92L813 722.97L813.55 744.34L814.11 749.68L814.66 737.62L815.21 706.69L815.77 732.55L816.32 728.91L816.87 731.16L817.43 726.23L817.98 715.59L818.53 707.64L819.09 757.53L819.64 707.67L820.19 729.99L820.75 735.03L821.3 689.62L821.85 732.07L822.4 696.58L822.96 712.61L823.51 745.79L824.06 720.13L824.62 715.71L825.17 729.96L825.72 766.86L826.28 733.2L826.83 730.39L827.38 745.68L827.94 695.7L828.49 730.6L829.04 732.91L829.6 731.09L830.15 739.13L830.7 738.79L831.26 723.65L831.81 719.64L832.36 733.51L832.92 726.11L833.47 748.31L834.02 715.05L834.58 736.81L835.13 719.86L835.68 739.11L836.23 732.08L836.79 719.11L837.34 743.78L837.89 679.16L838.45 722.78L839 723.17L839.55 734.57L840.11 693.31L840.66 696.7L841.21 715.62L841.77 744.9L842.32 729.37L842.87 709.24L843.43 729.05L843.98 740.8L844.53 740.65L845.09 732.99L845.64 718.7L846.19 730.34L846.75 718.12L847.3 667.94L847.85 685.99L848.41 736.44L848.96 711.24L849.51 715.63L850.06 719.46L850.62 697.74L851.17 722.5L851.72 722.13L852.28 722.79L852.83 717.53L853.38 691.88L853.94 700.94L854.49 739.59L855.04 722.81L855.6 729.13L856.15 699.09L856.7 709.75L857.26 697.17L857.81 714.55L858.36 748.62L858.92 704.49L859.47 708.38L860.02 702.88L860.58 736.48L861.13 710.33L861.68 724.5L862.24 724.24L862.79 704.42L863.34 704.17L863.89 727.4L864.45 742.67L865 756.89L865.55 720.68L866.11 688.18L866.66 710.29L867.21 751.89L867.77 725.18L868.32 700.39L868.87 676.16L869.43 685.53L869.98 700.62L870.53 703.6L871.09 727.53L871.64 715.59L872.19 713.03L872.75 721.31L873.3 704.83L873.85 713.42L874.41 698.97L874.96 677.34L875.51 690.53L876.07 696.56L876.62 709.16L877.17 733.95L877.72 706.15L878.28 692.96L878.83 723.21L879.38 678.39L879.94 709.41L880.49 695.2L881.04 708.78L881.6 726.89L882.15 660.68L882.7 724.55L883.26 682.9L883.81 711.99L884.36 695.06L884.92 716.47L885.47 708.42L886.02 681.35L886.58 660.45L887.13 716.29L887.68 698.77L888.24 679.58L888.79 711.16L889.34 683.76L889.9 713.76L890.45 685.32L891 688.43L891.55 672.36L892.11 689.33L892.66 720.81L893.21 682.6L893.77 718.44L894.32 680.22L894.87 664.32L895.43 682.8L895.98 706.15L896.53 669.9L897.09 690.73L897.64 719.66L898.19 700.97L898.75 663.92L899.3 699.37L899.85 690.24L900.41 699.62L900.96 727.35L901.51 702.57L902.07 684.17L902.62 686.98L903.17 694.69L903.73 735.58L904.28 664.77L904.83 675.02L905.38 668.3L905.94 662.13L906.49 698.71L907.04 701.81L907.6 682.06L908.15 652.9L908.7 723.98L909.26 692.74L909.81 702.8L910.36 675.32L910.92 655.66L911.47 693.01L912.02 712.97L912.58 685.02L913.13 691.91L913.68 718.71L914.24 666.12L914.79 696.2L915.34 669.83L915.9 712.78L916.45 660.24L917 714.99L917.56 660.52L918.11 722.53L918.66 652.74L919.21 690.69L919.77 716.21L920.32 687.05L920.87 674.22L921.43 703.04L921.98 691.85L922.53 674.78L923.09 684.12L923.64 747.7L924.19 689.29L924.75 670.05L925.3 672.6L925.85 656.51L926.41 693.91L926.96 621.5L927.51 660.15L928.07 670.7L928.62 653.13L929.17 655.72L929.73 674.46L930.28 690.34L930.83 653.14L931.39 666.31L931.94 718.08L932.49 700.07L933.04 664.35L933.6 672.12L934.15 667.94L934.7 659.43L935.26 670.35L935.81 637.4L936.36 686.42L936.92 681.8L937.47 665.04L938.02 655.07L938.58 653.78L939.13 637.42L939.68 682.07L940.24 644.06L940.79 659.77L941.34 694.18L941.9 673.04L942.45 621.48L943 651.12L943.56 679.78L944.11 724.13L944.66 685.34L945.22 684.28L945.77 665.87L946.32 613.6L946.87 649.65L947.43 659.4L947.98 688.21L948.53 693.8L949.09 670.6L949.64 676.38L950.19 594.53L950.75 674.27L951.3 678.94L951.85 637.54L952.41 661.99L952.96 692.64L953.51 632.68L954.07 670.22L954.62 694.01L955.17 654.56L955.73 650.27L956.28 669.57L956.83 644.59L957.39 641.31L957.94 681.62L958.49 709.42L959.05 717.17L959.6 662.64L960.15 629.72L960.7 634.82L961.26 625.1L961.81 613.55L962.36 657.54L962.92 632.1L963.47 694.22L964.02 640.25L964.58 647.08L965.13 658.56L965.68 666.67L966.24 682.74L966.79 651.85L967.34 623.79L967.9 663.55L968.45 641.28L969 670.18L969.56 647.37L970.11 677.96L970.66 643.63L971.22 657.95L971.77 644.48L972.32 666.86L972.88 680.59L973.43 659.35L973.98 625.26L974.53 611.46L975.09 658.27L975.64 630.04L976.19 630.69L976.75 639.43L977.3 687.5L977.85 640.43L978.41 672.38L978.96 618.43L979.51 627.76L980.07 631.68L980.62 710.42L981.17 630.86L981.73 628.52L982.28 677.94L982.83 620.98L983.39 643.18L983.94 649.36L984.49 662.43L985.05 669.83L985.6 654.7L986.15 565.03L986.71 637.84L987.26 637.36L987.81 658.81L988.36 657.7L988.92 655.7L989.47 663.91L990.02 618.51L990.58 647.49L991.13 618L991.68 669.51L992.24 615.63L992.79 639.85L993.34 621.61L993.9 641.13L994.45 661.02L995 606.46L995.56 648.66L996.11 640.85L996.66 659.65L997.22 631.02L997.77 646.1L998.32 628.27L998.88 626.28L999.43 652.87L999.98 671.38L1000.54 622.88L1001.09 609.81L1001.64 615.23L1002.19 663.16L1002.75 616.87L1003.3 622.29L1003.85 624.57L1004.41 620.36L1004.96 639.86L1005.51 625.29L1006.07 606.09L1006.62 643.59L1007.17 668.02L1007.73 632.29L1008.28 623.94L1008.83 677.82L1009.39 646.42L1009.94 612.35L1010.49 631.69L1011.05 624.86L1011.6 660.62L1012.15 602.34L1012.71 579.23L1013.26 631.22L1013.81 645.16L1014.37 656.24L1014.92 600.8L1015.47 621.59L1016.02 645.45L1016.58 590.9L1017.13 513.68L1017.68 606.6L1018.24 670.21L1018.79 624.99L1019.34 604.83L1019.9 654.71L1020.45 595.8L1021 581.74L1021.56 592.14L1022.11 639.64L1022.66 638.91L1023.22 593.45L1023.77 591.61L1024.32 584.77L1024.88 585.14L1025.43 620.45L1025.98 628.6L1026.54 668.02L1027.09 594.97L1027.64 553.41L1028.2 628.62L1028.75 628.6L1029.3 597.12L1029.85 604.33L1030.41 652.32L1030.96 633.77L1031.51 644.07L1032.07 556.94L1032.62 632.77L1033.17 588.61L1033.73 558.52L1034.28 558.73L1034.83 571.4L1035.39 565.27L1035.94 645.13L1036.49 619.82L1037.05 630.19L1037.6 617.51L1038.15 535.21L1038.71 655.89L1039.26 592.46L1039.81 642.72L1040.37 569.6L1040.92 570.28L1041.47 621.16L1042.03 547.6L1042.58 603.77L1043.13 568.48L1043.68 596.26L1044.24 620.67L1044.79 615.18L1045.34 607.32L1045.9 585.93L1046.45 599.57L1047 535.25L1047.56 607.92L1048.11 615.39L1048.66 622.25L1049.22 623.54L1049.77 642.23L1050.32 628.8L1050.88 573.92L1051.43 597.91L1051.98 604.2L1052.54 588.73L1053.09 567.58L1053.64 580.24L1054.2 575.26L1054.75 613.52L1055.3 604.47L1055.86 619.06L1056.41 598.91L1056.96 619.52L1057.51 606.16L1058.07 600L1058.62 600.81L1059.17 601.89L1059.73 608.1L1060.28 554.9L1060.83 602.94L1061.39 622.21L1061.94 586.41L1062.49 623.76L1063.05 622.91L1063.6 588.41" stroke="#00fa00" stroke-width="1.65" fill="none" stroke-linejoin="round"/>
<path d="M510.4 797.4L511.51 797.4L512.61 797.4L513.72 797.4L514.83 797.4L515.93 797.4L517.04 797.4L518.14 797.4L519.25 797.4L520.36 797.4L521.46 797.4L522.57 797.4L523.68 797.4L524.78 797.4L525.89 797.4L527 797.4L528.1 797.4L529.21 797.4L530.32 797.4L531.42 797.4L532.53 797.4L533.63 797.4L534.74 797.4L535.85 797.4L536.95 797.4L538.06 797.4L539.17 797.35L540.27 797.29L541.38 797.24L542.49 797.18L543.59 797.13L544.7 797.08L545.8 797.02L546.91 796.97L548.02 796.92L549.12 796.86L550.23 796.81L551.34 796.75L552.44 796.7L553.55 796.65L554.66 796.59L555.76 796.54L556.87 796.49L557.98 796.43L559.08 796.38L560.19 796.32L561.29 796.27L562.4 796.22L563.51 796.16L564.61 796.11L565.72 796.05L566.83 796L567.93 795.95L569.04 795.89L570.15 795.84L571.25 795.79L572.36 795.73L573.46 795.68L574.57 795.62L575.68 795.57L576.78 795.52L577.89 795.46L579 795.41L580.1 795.36L581.21 795.3L582.32 795.25L583.42 795.19L584.53 795.14L585.64 795.09L586.74 795.03L587.85 794.98L588.95 794.92L590.06 794.87L591.17 794.82L592.27 794.76L593.38 794.71L594.49 794.6L595.59 794.5L596.7 794.39L597.81 794.28L598.91 794.18L600.02 794.07L601.12 793.96L602.23 793.86L603.34 793.75L604.44 793.64L605.55 793.54L606.66 793.43L607.76 793.32L608.87 793.22L609.98 793.11L611.08 793L612.19 792.9L613.3 792.79L614.4 792.68L615.51 792.58L616.61 792.47L617.72 792.36L618.83 792.26L619.93 792.15L621.04 792.04L622.15 792.03L623.25 792.01L624.36 791.99L625.47 791.97L626.57 791.95L627.68 791.93L628.78 791.92L629.89 791.9L631 791.88L632.1 791.86L633.21 791.84L634.32 791.83L635.42 791.81L636.53 791.79L637.64 791.77L638.74 791.45L639.85 791.13L640.96 790.81L642.06 790.48L643.17 790.16L644.27 789.84L645.38 789.52L646.49 789.2L647.59 788.88L648.7 788.56L649.81 788.43L650.91 788.3L652.02 788.17L653.13 788.04L654.23 787.91L655.34 787.79L656.44 787.66L657.55 787.53L658.66 787.4L659.76 787.27L660.87 787.14L661.98 787.01L663.08 786.89L664.19 786.76L665.3 786.63L666.4 786.5L667.51 786.37L668.62 786.24L669.72 786.11L670.83 785.99L671.93 785.86L673.04 785.73L674.15 785.6L675.25 785.47L676.36 785.34L677.47 785.1L678.57 784.85L679.68 784.61L680.79 784.36L681.89 784.11L683 783.87L684.1 783.62L685.21 783.37L686.32 783.13L687.42 782.88L688.53 782.64L689.64 782.39L690.74 782.14L691.85 781.9L692.96 781.65L694.06 781.41L695.17 781.16L696.28 780.91L697.38 780.67L698.49 780.42L699.59 780.18L700.7 779.93L701.81 779.68L702.91 779.44L704.02 779.19L705.13 779.19L706.23 779.19L707.34 779.19L708.45 779.19L709.55 779.19L710.66 779.19L711.76 779.19L712.87 779.19L713.98 779.19L715.08 779.19L716.19 778.78L717.3 778.37L718.4 777.96L719.51 777.55L720.62 777.14L721.72 776.73L722.83 776.32L723.94 775.91L725.04 775.5L726.15 775.09L727.25 774.68L728.36 774.27L729.47 773.86L730.57 773.45L731.68 773.04L732.79 772.66L733.89 772.29L735 771.91L736.11 771.54L737.21 771.16L738.32 770.78L739.42 770.41L740.53 770.03L741.64 769.66L742.74 769.28L743.85 768.91L744.96 768.53L746.06 768.15L747.17 767.78L748.28 767.4L749.38 767.03L750.49 766.65L751.6 766.28L752.7 765.9L753.81 765.53L754.91 765.15L756.02 764.77L757.13 764.4L758.23 764.02L759.34 763.65L760.45 763.22L761.55 762.79L762.66 762.36L763.77 761.93L764.87 761.5L765.98 761.08L767.08 760.65L768.19 760.22L769.3 759.79L770.4 759.36L771.51 758.93L772.62 758.51L773.72 758.08L774.83 757.65L775.94 757.22L777.04 756.79L778.15 756.36L779.26 755.93L780.36 755.51L781.47 755.08L782.57 754.65L783.68 754.22L784.79 753.79L785.89 753.36L787 752.94L788.11 752.47L789.21 752L790.32 751.54L791.43 751.07L792.53 750.6L793.64 750.14L794.74 749.67L795.85 749.21L796.96 748.74L798.06 748.27L799.17 747.81L800.28 747.34L801.38 746.87L802.49 746.41L803.6 745.94L804.7 745.48L805.81 745.01L806.92 744.54L808.02 744.08L809.13 743.6L810.23 743.11L811.34 742.62L812.45 742.13L813.55 741.64L814.66 741.14L815.77 740.65L816.87 740.16L817.98 739.67L819.09 739.18L820.19 738.51L821.3 737.66L822.4 736.81L823.51 735.96L824.62 735.11L825.72 734.26L826.83 733.41L827.94 732.56L829.04 731.71L830.15 730.87L831.26 730.47L832.36 730.08L833.47 729.69L834.58 729.3L835.68 728.91L836.79 728.51L837.89 728.12L839 727.73L840.11 727.34L841.21 726.95L842.32 726.56L843.43 726.05L844.53 725.54L845.64 725.03L846.75 724.52L847.85 724.01L848.96 723.5L850.06 722.99L851.17 722.48L852.28 721.73L853.38 720.76L854.49 719.78L855.6 718.8L856.7 717.83L857.81 717.11L858.92 716.66L860.02 716.21L861.13 715.75L862.24 715.3L863.34 714.85L864.45 714.39L865.55 713.94L866.66 713.49L867.77 713.03L868.87 712.58L869.98 712.13L871.09 711.68L872.19 711.22L873.3 710.77L874.41 710.32L875.51 709.86L876.62 709.41L877.72 708.96L878.83 708.5L879.94 708.05L881.04 707.69L882.15 707.43L883.26 707.16L884.36 706.9L885.47 706.63L886.58 706.37L887.68 706.1L888.79 705.84L889.9 705.58L891 705.31L892.11 705.05L893.21 704.78L894.32 704.52L895.43 704.08L896.53 703.47L897.64 702.86L898.75 702.25L899.85 701.64L900.96 701.03L902.07 700.42L903.17 699.81L904.28 699.2L905.38 698.6L906.49 697.99L907.6 697.38L908.7 696.77L909.81 696.16L910.92 695.55L912.02 694.94L913.13 694.33L914.24 693.85L915.34 693.5L916.45 693.15L917.56 692.8L918.66 692.45L919.77 692.1L920.87 691.75L921.98 691.39L923.09 691.04L924.19 690.69L925.3 690.34L926.41 689.99L927.51 689.64L928.62 689.29L929.73 688.8L930.83 688.17L931.94 687.54L933.04 686.91L934.15 686.28L935.26 685.65L936.36 685.01L937.47 684.38L938.58 683.75L939.68 683.12L940.79 682.49L941.9 682.16L943 681.83L944.11 681.5L945.22 681.17L946.32 680.84L947.43 680.51L948.53 680.18L949.64 679.85L950.75 679.52L951.85 679.19L952.96 678.62L954.07 677.8L955.17 676.98L956.28 676.15L957.39 675.33L958.49 674.51L959.6 673.69L960.7 672.87L961.81 672.05L962.92 671.23L964.02 670.41L965.13 670.41L966.24 670.41L967.34 670.41L968.45 670.41L969.56 669.46L970.66 668.5L971.77 667.55L972.88 666.6L973.98 665.64L975.09 664.69L976.19 663.74L977.3 662.78L978.41 661.83L979.51 660.88L980.62 659.92L981.73 659.07L982.83 658.3L983.94 657.53L985.05 656.77L986.15 656L987.26 655.23L988.36 654.47L989.47 653.7L990.58 652.93L991.68 652.37L992.79 652.01L993.9 651.65L995 651.28L996.11 650.63L997.22 649.68L998.32 648.72L999.43 647.77L1000.54 646.82L1001.64 645.87L1002.75 644.91L1003.85 643.96L1004.96 643.01L1006.07 642.06L1007.17 641.1L1008.28 640.15L1009.39 639.2L1010.49 638.49L1011.6 638.02L1012.71 637.56L1013.81 637.09L1014.92 636.62L1016.02 636.15L1017.13 635.69L1018.24 635.22L1019.34 634.92L1020.45 634.8L1021.56 634.67L1022.66 634.54L1023.77 634.41L1024.88 633.45L1025.98 632.49L1027.09 631.53L1028.2 630.57L1029.3 629.61L1030.41 628.65L1031.51 627.68L1032.62 626.72L1033.73 625.76L1034.83 624.8L1035.94 623.84L1037.05 622.88L1038.15 621.92L1039.26 620.99L1040.37 620.11L1041.47 619.22L1042.58 618.34L1043.68 617.45L1044.79 616.57L1045.9 615.68L1047 614.79L1048.11 613.91L1049.22 613.02L1050.32 612.13L1051.43 611.24L1052.54 610.53L1053.64 609.98L1054.75 609.43L1055.86 608.88L1056.96 608.33L1058.07 607.79L1059.17 607.24L1060.28 606.69L1061.39 606.14L1062.49 605.59L1063.6 605.04" stroke="#0a0ae0" stroke-width="1.5" fill="none"/>
<path d="M510.4 825.36v-5M510.4 499.5v5M621.04 825.36v-5M621.04 499.5v5M731.68 825.36v-5M731.68 499.5v5M842.32 825.36v-5M842.32 499.5v5M952.96 825.36v-5M952.96 499.5v5M1063.6 825.36v-5M1063.6 499.5v5M483.6 797.4h5M1090.45 797.4h-5M483.6 747.58h5M1090.45 747.58h-5M483.6 697.76h5M1090.45 697.76h-5M483.6 647.94h5M1090.45 647.94h-5M483.6 598.12h5M1090.45 598.12h-5M483.6 548.3h5M1090.45 548.3h-5" stroke="#000" stroke-width="1.2" fill="none"/>
<rect x="483.6" y="499.5" width="606.85" height="325.86" fill="none" stroke="#000" stroke-width="1.2"/>
<text x="509.8" y="842.16" font-size="15.4" text-anchor="middle" fill="#000" textLength="7.83" lengthAdjust="spacingAndGlyphs">0</text>
<text x="620.44" y="842.16" font-size="15.4" text-anchor="middle" fill="#000" textLength="15.67" lengthAdjust="spacingAndGlyphs">20</text>
<text x="731.08" y="842.16" font-size="15.4" text-anchor="middle" fill="#000" textLength="15.67" lengthAdjust="spacingAndGlyphs">40</text>
<text x="841.72" y="842.16" font-size="15.4" text-anchor="middle" fill="#000" textLength="15.67" lengthAdjust="spacingAndGlyphs">60</text>
<text x="952.36" y="842.16" font-size="15.4" text-anchor="middle" fill="#000" textLength="15.67" lengthAdjust="spacingAndGlyphs">80</text>
<text x="1063" y="842.16" font-size="15.4" text-anchor="middle" fill="#000" textLength="23.5" lengthAdjust="spacingAndGlyphs">100</text>
<text x="476.9" y="803" font-size="15.4" text-anchor="end" fill="#000" textLength="7.83" lengthAdjust="spacingAndGlyphs">0</text>
<text x="476.9" y="753.18" font-size="15.4" text-anchor="end" fill="#000" textLength="31.34" lengthAdjust="spacingAndGlyphs">2000</text>
<text x="476.9" y="703.36" font-size="15.4" text-anchor="end" fill="#000" textLength="31.34" lengthAdjust="spacingAndGlyphs">4000</text>
<text x="476.9" y="653.54" font-size="15.4" text-anchor="end" fill="#000" textLength="31.34" lengthAdjust="spacingAndGlyphs">6000</text>
<text x="476.9" y="603.72" font-size="15.4" text-anchor="end" fill="#000" textLength="31.34" lengthAdjust="spacingAndGlyphs">8000</text>
<text x="476.9" y="553.9" font-size="15.4" text-anchor="end" fill="#000" textLength="39.17" lengthAdjust="spacingAndGlyphs">10000</text>
<text x="786.6" y="490.5" font-size="16" text-anchor="middle" fill="#000" textLength="100.2" lengthAdjust="spacingAndGlyphs">N-S Position</text>
<text x="786.6" y="863.56" font-size="14.5" text-anchor="middle" fill="#000" textLength="66.6" lengthAdjust="spacingAndGlyphs">Time (sec)</text>
<rect x="89.6" y="499.5" width="314.9" height="325.86" fill="#fff"/>
<path d="M89.5 499.5V825.36M151.5 499.5V825.36M214.5 499.5V825.36M276.5 499.5V825.36M339.5 499.5V825.36M401.5 499.5V825.36" stroke="#000" stroke-opacity="0.15" stroke-width="1" fill="none"/>
<path d="M89.6 786.5H404.5M89.6 732.5H404.5M89.6 678.5H404.5M89.6 624.5H404.5M89.6 570.5H404.5M89.6 516.5H404.5" stroke="#000" stroke-opacity="0.15" stroke-width="1" fill="none"/>
<path d="M88.9 580.73L92.02 619.09L95.15 642.24L98.27 559.58L101.39 541.08L104.52 715.39L107.64 597.02L110.76 642.68L113.89 593.5L117.01 582.14L120.14 514.19L123.26 567.26L126.38 551.41L129.51 609.78L132.63 575.49L135.75 627.2L138.88 664.97L142 669.67L145.12 612.11L148.25 546.05L151.37 543.89L154.49 716.09L157.62 559.58L160.74 523.66L163.86 715.39L166.99 645.82L170.11 640.13L173.23 579.06L176.36 587.82L179.48 599.45L182.61 589.93L185.73 604.81L188.85 690.5L191.98 620.17L195.1 553.85L198.22 642.68L201.35 597.83L204.47 647.22L207.59 682.44L210.72 533.29L213.84 690.5L216.96 634.24L220.09 578.51L223.21 661.4L226.33 621.36L229.46 631.59L232.58 644.35L235.7 613.14L238.83 582.84L241.95 671.35L245.08 743.79L248.2 682.71L251.32 667.08L254.45 673.79L257.57 664.7L260.69 761.86L263.82 657.18L266.94 604.1L270.06 652.9L273.19 633.75L276.31 728.16L279.43 637.97L282.56 632.99L285.68 657.88L288.8 620.93L291.93 640.13L295.05 668.54L298.17 712.52L301.3 737.95L304.42 730.86L307.54 758.61L310.67 612.33L313.79 810.28L316.92 674.76L320.04 609.08L323.16 667.08L326.29 716.09L329.41 597.45L332.53 602.7L335.66 665.07L338.78 691.96L341.9 687.69L345.03 529.77L348.15 624.5L351.27 658.58L354.4 695.21L357.52 657.18L360.64 627.31L363.77 708.3L366.89 618.55L370.01 669.94L373.14 591.77L376.26 631.59L379.39 677.03L382.51 628.77L385.63 621.25L388.76 684.12L391.88 589.93L395 600.26L398.13 548.16L401.25 568.72" stroke="#1f77b4" stroke-width="0.9" fill="none" stroke-linejoin="round"/>
<path d="M89.1 825.36v-5M89.1 499.5v5M151.64 825.36v-5M151.64 499.5v5M214.18 825.36v-5M214.18 499.5v5M276.72 825.36v-5M276.72 499.5v5M339.26 825.36v-5M339.26 499.5v5M401.8 825.36v-5M401.8 499.5v5M89.6 786.54h5M404.5 786.54h-5M89.6 732.48h5M404.5 732.48h-5M89.6 678.42h5M404.5 678.42h-5M89.6 624.36h5M404.5 624.36h-5M89.6 570.3h5M404.5 570.3h-5M89.6 516.24h5M404.5 516.24h-5" stroke="#000" stroke-width="1.2" fill="none"/>
<rect x="89.6" y="499.5" width="314.9" height="325.86" fill="none" stroke="#000" stroke-width="1.2"/>
<text x="88.5" y="842.16" font-size="15.4" text-anchor="middle" fill="#000" textLength="7.83" lengthAdjust="spacingAndGlyphs">0</text>
<text x="151.04" y="842.16" font-size="15.4" text-anchor="middle" fill="#000" textLength="15.67" lengthAdjust="spacingAndGlyphs">20</text>
<text x="213.58" y="842.16" font-size="15.4" text-anchor="middle" fill="#000" textLength="15.67" lengthAdjust="spacingAndGlyphs">40</text>
<text x="276.12" y="842.16" font-size="15.4" text-anchor="middle" fill="#000" textLength="15.67" lengthAdjust="spacingAndGlyphs">60</text>
<text x="338.66" y="842.16" font-size="15.4" text-anchor="middle" fill="#000" textLength="15.67" lengthAdjust="spacingAndGlyphs">80</text>
<text x="401.2" y="842.16" font-size="15.4" text-anchor="middle" fill="#000" textLength="23.5" lengthAdjust="spacingAndGlyphs">100</text>
<text x="83.5" y="792.14" font-size="15.4" text-anchor="end" fill="#000" textLength="36.03" lengthAdjust="spacingAndGlyphs">-4000</text>
<text x="83.5" y="738.08" font-size="15.4" text-anchor="end" fill="#000" textLength="36.03" lengthAdjust="spacingAndGlyphs">-3000</text>
<text x="83.5" y="684.02" font-size="15.4" text-anchor="end" fill="#000" textLength="36.03" lengthAdjust="spacingAndGlyphs">-2000</text>
<text x="83.5" y="629.96" font-size="15.4" text-anchor="end" fill="#000" textLength="36.03" lengthAdjust="spacingAndGlyphs">-1000</text>
<text x="83.5" y="575.9" font-size="15.4" text-anchor="end" fill="#000" textLength="7.83" lengthAdjust="spacingAndGlyphs">0</text>
<text x="83.5" y="521.84" font-size="15.4" text-anchor="end" fill="#000" textLength="31.34" lengthAdjust="spacingAndGlyphs">1000</text>
<text x="246.25" y="490.5" font-size="16" text-anchor="middle" fill="#000" textLength="240.6" lengthAdjust="spacingAndGlyphs">Estimation Residual for Range</text>
<text x="246.05" y="862.6" font-size="14.5" text-anchor="middle" fill="#000" textLength="175.2" lengthAdjust="spacingAndGlyphs">Number of Measurements</text>
<text transform="translate(35.1 662.95) rotate(-90)" font-size="14.5" text-anchor="middle" fill="#000" textLength="180.6" lengthAdjust="spacingAndGlyphs">Range Estimate Error - Feet</text>
<path d="M14.8 44.8H28.6L32.4 48.6V63.2H14.8Z" fill="#f4f4f4" stroke="#636363" stroke-width="1.35" stroke-linejoin="round"/>
<rect x="17" y="53.3" width="13.6" height="8.2" rx="0.8" fill="url(#gSave)" stroke="#a88a3a" stroke-width="0.7"/>
<path d="M19.2 48.2H27.4" stroke="#7a7a7a" stroke-width="1.5"/>
<path d="M52.5 44.8H41.8V63.2H58.6V53.5" fill="#f6f6f6" stroke="#6a6a6a" stroke-width="1.4" stroke-linejoin="round"/>
<path d="M44.2 48.4H47.6M44.2 52.4H47.6M44.2 56.4H56M44.2 60.2H54" stroke="#7d7d7d" stroke-width="1"/>
<path d="M48 53.2C49 48.6 52 46.6 55 47V44.6L60.6 48.4L55.2 52V49.8C52.4 49.6 50 50.8 48 53.2Z" fill="url(#gArr)" stroke="#4a9a40" stroke-width="0.5"/>
<path d="M85 44.2L88.6 48.6H86.4V52.6H90.4V50.4L94.8 54L90.4 57.6V55.4H86.4V59.4H88.6L85 63.8L81.4 59.4H83.6V55.4H79.6V57.6L75.2 54L79.6 50.4V52.6H83.6V48.6H81.4Z" fill="#cfcfcf" stroke="#b2b2b2" stroke-width="0.8" stroke-linejoin="round"/>
<rect x="83.7" y="52.7" width="2.6" height="2.6" fill="#e6e6e6"/>
<circle cx="111.2" cy="53" r="8.5" fill="none" stroke="#9a9a9a" stroke-width="1.3"/>
<path d="M107 53H115.4M111.2 48.8V57.2" stroke="#9a9a9a" stroke-width="1.3"/>
<path d="M117.2 59.2L121.2 63.2" stroke="#9a9a9a" stroke-width="1.5"/>
<path d="M129 44.3H134L129 49.3ZM149 44.3V49.3L144 44.3ZM129 63.7V58.7L134 63.7ZM149 63.7H144L149 58.7Z" fill="#a6a6a6"/>
<path d="M132.4 57C133.4 51 135.4 48.6 137.2 50.6C139.4 53 140.2 58.4 142.4 57.6C144.4 56.8 145.6 52.6 146.6 49.6" fill="none" stroke="#6e6e6e" stroke-width="1.3" stroke-linecap="round"/>
<path d="M158.4 54L165.6 46.2V50.4H175.4V57.6H165.6V61.8Z" fill="none" stroke="#5a5a5a" stroke-width="1.35" stroke-linejoin="miter"/>
<path d="M202.6 54L195.4 46.2V50.4H185V57.6H195.4V61.8Z" fill="none" stroke="#5a5a5a" stroke-width="1.5" stroke-linejoin="miter"/>
<path d="M227 44.5V63.5" stroke="#f2aebb" stroke-width="1.5" stroke-dasharray="1.3 1.1"/>
<path d="M217.3 59.5C218.8 52 221 47.4 223.2 48.5C225.6 49.8 225.2 58.4 229.4 59.6C233.2 60.6 235.6 54 236.6 48.7" fill="none" stroke="#4e4e4e" stroke-width="1.25" stroke-linecap="round"/>
<rect x="225.4" y="54.7" width="3.2" height="3.2" rx="0.9" fill="#f3cdb0" stroke="#c65a22" stroke-width="1"/>
<path d="M245 45.7H262.3V58.3H258.6L260 63.2L252.8 58.3H245Z" fill="#f7f7f7" stroke="#5a5a5a" stroke-width="1.4" stroke-linejoin="miter"/>
<path d="M248 49.2H259.6M248 53.2H255" stroke="#f5c21a" stroke-width="1.6"/>
<rect x="268.5" y="41.5" width="26" height="24" fill="#cce4f7" stroke="#99d1ff" stroke-width="1"/>
<path d="M275.7 45V65M282.1 45V65M288.5 45V65M272 48.9H292M272 55.2H292M272 61.6H292" stroke="#1b5f80" stroke-width="1.5"/>
<rect x="298.8" y="45" width="18.6" height="18.4" fill="#f7f7f7" stroke="#5a5a5a" stroke-width="1.5"/>
<rect x="302.2" y="48.8" width="3.8" height="3.8" fill="#e8245c" stroke="#b8a070" stroke-width="0.5"/>
<rect x="302.2" y="55.6" width="3.8" height="3.8" fill="#10577e" stroke="#b8a070" stroke-width="0.5"/>
<path d="M308.6 50.6H314.6M308.6 57.6H314.6" stroke="#666" stroke-width="1.1"/>
<rect x="328.6" y="45.2" width="12.8" height="18" fill="url(#gCb)" stroke="#7a7a7a" stroke-width="1.2"/>
<rect x="352.7" y="44.9" width="18.6" height="18.4" fill="#f4f4f4" stroke="#8a8a8a" stroke-width="1.3"/>
<path d="M355.8 45.8V62.6M368.3 45.8V62.6M353.8 47.8H370.4M353.8 60.4H370.4" fill="none" stroke="#e4684a" stroke-width="1.1" stroke-dasharray="1.1 0.9"/>
<rect x="386.8" y="44.9" width="18.6" height="18.4" fill="#f4f4f4" stroke="#5a5a5a" stroke-width="1.5"/>
<path d="M390 47.6H402.4V51.2H401.2V49.9H397.3V59.4H398.7V60.7H393.7V59.4H395.1V49.9H391.2V51.2H390Z" fill="#5597b8" stroke="#4a8eb0" stroke-width="0.25"/>
<rect x="414.3" y="45" width="18" height="17.2" fill="none" stroke="#1d6a8f" stroke-width="1.5"/>
<rect x="431.4" y="44.2" width="1.8" height="1.8" fill="#fff" stroke="#888" stroke-width="0.4"/><rect x="413.4" y="61.2" width="1.8" height="1.8" fill="#fff" stroke="#888" stroke-width="0.4"/>
<ellipse cx="449.9" cy="53.8" rx="9.3" ry="7.7" fill="none" stroke="#1d6a8f" stroke-width="1.5"/>
<path d="M468.4 62.2L485.4 45.8" stroke="#1d6a8f" stroke-width="1.4"/>
<rect x="484.6" y="44.6" width="2" height="2" fill="#fff" stroke="#888" stroke-width="0.4"/><rect x="467.2" y="61.4" width="2" height="2" fill="#fff" stroke="#888" stroke-width="0.4"/>
<path d="M494.4 63.6L509 48.8" stroke="#1d6a8f" stroke-width="1.5"/>
<path d="M513.6 44.2L511.4 51.6L506.2 46.4Z" fill="#1d6a8f"/>
<path d="M528 56.8L537.4 47.6" stroke="#1d6a8f" stroke-width="1.4"/>
<path d="M540.8 44.2L539 49.8L535.2 46Z" fill="#1d6a8f"/>
<path d="M521.2 57.8H527.2V59.6H526.4V58.8H524.9V63H525.8V63.8H522.6V63H523.5V58.8H522V59.6H521.2Z" fill="#3b8db0"/>
<path d="M551.6 60.2L564.4 47.6" stroke="#1d6a8f" stroke-width="1.6"/>
<path d="M568 44L565.6 51.2L560.8 46.4Z" fill="#1d6a8f"/>
<path d="M548 63.8L550.4 56.6L555.2 61.4Z" fill="#1d6a8f"/>
<path d="M587.6 45.2V61.2L591.2 57.8L593.8 63L596.2 61.8L593.6 56.8L598.4 56.4Z" fill="#f2f2f2" stroke="#484848" stroke-width="1.1" stroke-linejoin="miter"/>
<path d="M626.70 53.80L626.70 53.53L626.68 53.26L626.66 52.99L626.63 52.73L626.62 52.46L626.68 52.17L627.06 51.79L627.74 51.29L628.08 50.85L628.08 50.49L627.98 50.17L627.86 49.86L627.72 49.55L627.56 49.25L627.40 48.95L627.23 48.66L627.04 48.38L626.84 48.10L626.64 47.83L626.40 47.59L626.09 47.41L625.54 47.48L624.77 47.83L624.26 47.96L623.97 47.87L623.75 47.72L623.53 47.57L623.31 47.42L623.08 47.27L622.85 47.13L622.62 47.00L622.38 46.88L622.13 46.76L621.89 46.65L621.65 46.53L621.43 46.33L621.29 45.82L621.20 44.97L620.98 44.46L620.68 44.28L620.35 44.20L620.01 44.16L619.68 44.12L619.34 44.11L619.00 44.10L618.66 44.11L618.32 44.12L617.99 44.16L617.65 44.20L617.32 44.28L617.02 44.46L616.80 44.97L616.71 45.82L616.57 46.33L616.35 46.53L616.11 46.65L615.87 46.76L615.62 46.88L615.38 47.00L615.15 47.13L614.92 47.27L614.69 47.42L614.47 47.57L614.25 47.72L614.03 47.87L613.74 47.96L613.23 47.83L612.46 47.48L611.91 47.41L611.60 47.59L611.36 47.83L611.16 48.10L610.96 48.38L610.77 48.66L610.60 48.95L610.44 49.25L610.28 49.55L610.14 49.86L610.02 50.17L609.92 50.49L609.92 50.85L610.26 51.29L610.94 51.79L611.32 52.17L611.38 52.46L611.37 52.73L611.34 52.99L611.32 53.26L611.30 53.53L611.30 53.80L611.30 54.07L611.32 54.34L611.34 54.61L611.37 54.87L611.38 55.14L611.32 55.43L610.94 55.81L610.26 56.31L609.92 56.75L609.92 57.11L610.02 57.43L610.14 57.74L610.28 58.05L610.44 58.35L610.60 58.65L610.77 58.94L610.96 59.22L611.16 59.50L611.36 59.77L611.60 60.01L611.91 60.19L612.46 60.12L613.23 59.77L613.74 59.64L614.03 59.73L614.25 59.88L614.47 60.03L614.69 60.18L614.92 60.33L615.15 60.47L615.38 60.60L615.62 60.72L615.87 60.84L616.11 60.95L616.35 61.07L616.57 61.27L616.71 61.78L616.80 62.63L617.02 63.14L617.32 63.32L617.65 63.40L617.99 63.44L618.32 63.48L618.66 63.49L619.00 63.50L619.34 63.49L619.68 63.48L620.01 63.44L620.35 63.40L620.68 63.32L620.98 63.14L621.20 62.63L621.29 61.78L621.43 61.27L621.65 61.07L621.89 60.95L622.13 60.84L622.38 60.72L622.62 60.60L622.85 60.47L623.08 60.33L623.31 60.18L623.53 60.03L623.75 59.88L623.97 59.73L624.26 59.64L624.77 59.77L625.54 60.12L626.09 60.19L626.40 60.01L626.64 59.77L626.84 59.50L627.04 59.22L627.23 58.94L627.40 58.65L627.56 58.35L627.72 58.05L627.86 57.74L627.98 57.43L628.08 57.11L628.08 56.75L627.74 56.31L627.06 55.81L626.68 55.43L626.62 55.14L626.63 54.87L626.66 54.61L626.68 54.34L626.70 54.07Z" fill="#f1f1f1" stroke="#4d4d4d" stroke-width="1.15" stroke-linejoin="round"/>
<circle cx="619" cy="53.8" r="4.3" fill="none" stroke="#666" stroke-width="1.1"/>
<circle cx="619" cy="53.8" r="2.1" fill="#555"/>
<rect x="0" y="0" width="1125" height="1" fill="#767676"/><rect x="0" y="0" width="1" height="886" fill="#767676"/><rect x="1123" y="1" width="1" height="884" fill="#fafafa"/><rect x="1" y="884" width="1123" height="1" fill="#fafafa"/><rect x="1124" y="0" width="1" height="886" fill="#767676"/><rect x="0" y="885" width="1125" height="1" fill="#767676"/>
</svg></body></html>
